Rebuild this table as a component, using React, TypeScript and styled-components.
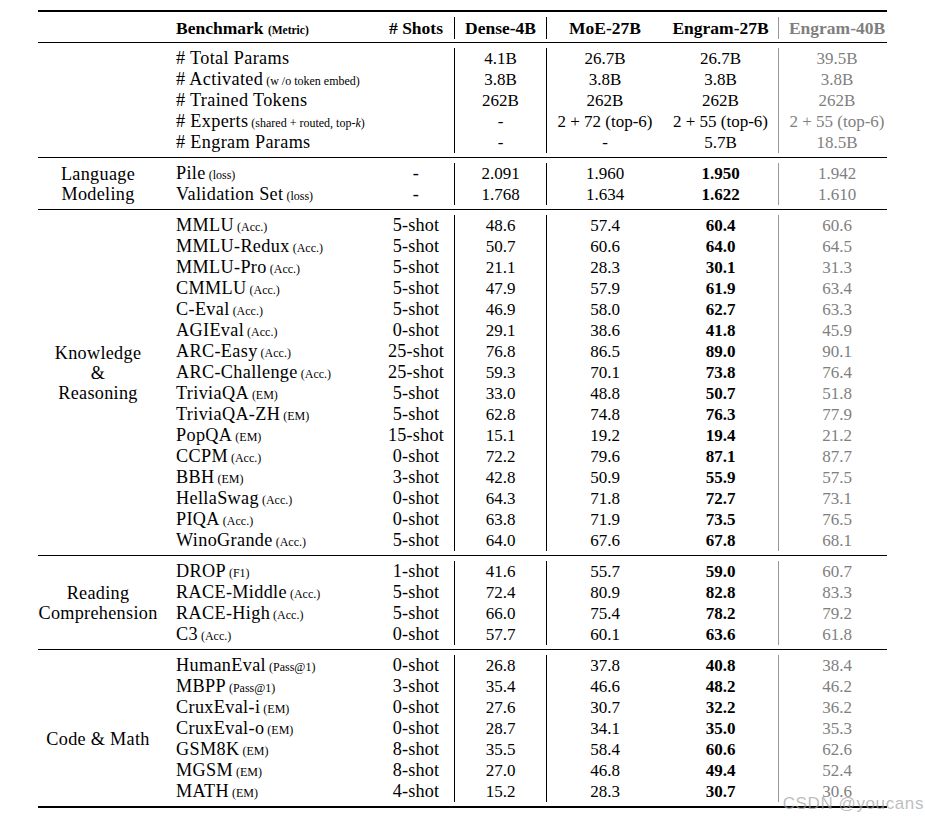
import React from "react";
import styled, { createGlobalStyle } from "styled-components";

type Row = {
  name: string;
  metric?: React.ReactNode;
  shots: string;
  values: [string, string, string, string];
};

type Section = {
  group?: string[];
  groupRow?: number;
  groupSpan?: number;
  boldEngram: boolean;
  rows: Row[];
};

const r = (
  name: string,
  metric: React.ReactNode,
  shots: string,
  a: string,
  b: string,
  c: string,
  d: string
): Row => ({ name, metric, shots, values: [a, b, c, d] });

const SECTIONS: Section[] = [
  {
    boldEngram: false,
    rows: [
      r("# Total Params", null, "", "4.1B", "26.7B", "26.7B", "39.5B"),
      r("# Activated", "(w /o token embed)", "", "3.8B", "3.8B", "3.8B", "3.8B"),
      r("# Trained Tokens", null, "", "262B", "262B", "262B", "262B"),
      r(
        "# Experts",
        <>
          (shared + routed, top-<i>k</i>)
        </>,
        "",
        "-",
        "2 + 72 (top-6)",
        "2 + 55 (top-6)",
        "2 + 55 (top-6)"
      ),
      r("# Engram Params", null, "", "-", "-", "5.7B", "18.5B"),
    ],
  },
  {
    group: ["Language", "Modeling"],
    groupRow: 1,
    groupSpan: 2,
    boldEngram: true,
    rows: [
      r("Pile", "(loss)", "-", "2.091", "1.960", "1.950", "1.942"),
      r("Validation Set", "(loss)", "-", "1.768", "1.634", "1.622", "1.610"),
    ],
  },
  {
    group: ["Knowledge", "&", "Reasoning"],
    groupRow: 7,
    groupSpan: 3,
    boldEngram: true,
    rows: [
      r("MMLU", "(Acc.)", "5-shot", "48.6", "57.4", "60.4", "60.6"),
      r("MMLU-Redux", "(Acc.)", "5-shot", "50.7", "60.6", "64.0", "64.5"),
      r("MMLU-Pro", "(Acc.)", "5-shot", "21.1", "28.3", "30.1", "31.3"),
      r("CMMLU", "(Acc.)", "5-shot", "47.9", "57.9", "61.9", "63.4"),
      r("C-Eval", "(Acc.)", "5-shot", "46.9", "58.0", "62.7", "63.3"),
      r("AGIEval", "(Acc.)", "0-shot", "29.1", "38.6", "41.8", "45.9"),
      r("ARC-Easy", "(Acc.)", "25-shot", "76.8", "86.5", "89.0", "90.1"),
      r("ARC-Challenge", "(Acc.)", "25-shot", "59.3", "70.1", "73.8", "76.4"),
      r("TriviaQA", "(EM)", "5-shot", "33.0", "48.8", "50.7", "51.8"),
      r("TriviaQA-ZH", "(EM)", "5-shot", "62.8", "74.8", "76.3", "77.9"),
      r("PopQA", "(EM)", "15-shot", "15.1", "19.2", "19.4", "21.2"),
      r("CCPM", "(Acc.)", "0-shot", "72.2", "79.6", "87.1", "87.7"),
      r("BBH", "(EM)", "3-shot", "42.8", "50.9", "55.9", "57.5"),
      r("HellaSwag", "(Acc.)", "0-shot", "64.3", "71.8", "72.7", "73.1"),
      r("PIQA", "(Acc.)", "0-shot", "63.8", "71.9", "73.5", "76.5"),
      r("WinoGrande", "(Acc.)", "5-shot", "64.0", "67.6", "67.8", "68.1"),
    ],
  },
  {
    group: ["Reading", "Comprehension"],
    groupRow: 2,
    groupSpan: 2,
    boldEngram: true,
    rows: [
      r("DROP", "(F1)", "1-shot", "41.6", "55.7", "59.0", "60.7"),
      r("RACE-Middle", "(Acc.)", "5-shot", "72.4", "80.9", "82.8", "83.3"),
      r("RACE-High", "(Acc.)", "5-shot", "66.0", "75.4", "78.2", "79.2"),
      r("C3", "(Acc.)", "0-shot", "57.7", "60.1", "63.6", "61.8"),
    ],
  },
  {
    group: ["Code & Math"],
    groupRow: 4,
    groupSpan: 2,
    boldEngram: true,
    rows: [
      r("HumanEval", "(Pass@1)", "0-shot", "26.8", "37.8", "40.8", "38.4"),
      r("MBPP", "(Pass@1)", "3-shot", "35.4", "46.6", "48.2", "46.2"),
      r("CruxEval-i", "(EM)", "0-shot", "27.6", "30.7", "32.2", "36.2"),
      r("CruxEval-o", "(EM)", "0-shot", "28.7", "34.1", "35.0", "35.3"),
      r("GSM8K", "(EM)", "8-shot", "35.5", "58.4", "60.6", "62.6"),
      r("MGSM", "(EM)", "8-shot", "27.0", "46.8", "49.4", "52.4"),
      r("MATH", "(EM)", "4-shot", "15.2", "28.3", "30.7", "30.6"),
    ],
  },
];

const MODELS = ["Dense-4B", "MoE-27B", "Engram-27B", "Engram-40B"];

export default function App() {
  return (
    <>
      <GlobalStyle />
      <Page>
        <Table>
          <Head>
            <HeadBench>
              Benchmark <SmallBold>(Metric)</SmallBold>
            </HeadBench>
            <HeadShots># Shots</HeadShots>
            {MODELS.map((m, i) => (
              <HeadModel key={m} $col={i}>
                {m}
              </HeadModel>
            ))}
          </Head>
          {SECTIONS.map((section, si) => (
            <Body key={si}>
              {section.group && (
                <GroupCell $row={section.groupRow ?? 1} $span={section.groupSpan ?? 1}>
                  {section.group.map((line) => (
                    <span key={line}>{line}</span>
                  ))}
                </GroupCell>
              )}
              {section.rows.map((row) => (
                <React.Fragment key={row.name}>
                  <BenchCell>
                    {row.name}
                    {row.metric && <Metric> {row.metric}</Metric>}
                  </BenchCell>
                  <ShotCell>{row.shots}</ShotCell>
                  {row.values.map((v, i) => (
                    <ValueCell key={i} $col={i} $bold={section.boldEngram && i === 2}>
                      {v}
                    </ValueCell>
                  ))}
                </React.Fragment>
              ))}
            </Body>
          ))}
        </Table>
        <Watermark>CSDN @youcans</Watermark>
      </Page>
    </>
  );
}

const GlobalStyle = createGlobalStyle`
  html, body {
    margin: 0;
    padding: 0;
    background: #ffffff;
  }
  body {
    font-family: "Liberation Serif", "DejaVu Serif", serif;
    color: #000;
  }
`;

const COLUMNS = "132px 208px 77px 92px 116px 116px 108px";
const GRAY = "#7f7f7f";

const Page = styled.div`
  position: relative;
  width: 925px;
  height: 818px;
  padding: 10px 0 0 38px;
  box-sizing: border-box;
`;

const Table = styled.div`
  width: 849px;
  border-top: 2px solid #000;
  border-bottom: 2px solid #000;
`;

const Grid = styled.div`
  display: grid;
  grid-template-columns: ${COLUMNS};
`;

const Head = styled(Grid)`
  grid-auto-rows: 22px;
  padding: 5px 0 3px;
  font-weight: bold;
  font-size: 17.5px;
  line-height: 22px;
`;

const Body = styled(Grid)`
  grid-auto-rows: 21px;
  padding: 5px 0 4px;
  border-top: 1px solid #000;
  font-size: 18.2px;
  line-height: 21px;
`;

const HeadBench = styled.div`
  grid-column: 2;
  padding-left: 6px;
  white-space: nowrap;
`;

const SmallBold = styled.span`
  font-size: 11.5px;
`;

const HeadShots = styled.div`
  grid-column: 3;
  text-align: center;
  border-right: 1px solid #000;
`;

const HeadModel = styled.div<{ $col: number }>`
  grid-column: ${(p) => p.$col + 4};
  text-align: center;
  white-space: nowrap;
  color: ${(p) => (p.$col === 3 ? GRAY : "#000")};
  padding-left: ${(p) => (p.$col === 3 ? "8px" : "0")};
  border-right: ${(p) =>
    p.$col === 0 ? "1px solid #000" : p.$col === 2 ? "1px solid #999" : "none"};
`;

const GroupCell = styled.div<{ $row: number; $span: number }>`
  grid-column: 1;
  grid-row: ${(p) => p.$row} / span ${(p) => p.$span};
  display: flex;
  flex-direction: column;
  align-items: center;
  justify-content: center;
  padding-right: 12px;
  line-height: 20px;
  letter-spacing: 0.3px;
  white-space: nowrap;
`;

const BenchCell = styled.div`
  grid-column: 2;
  padding-left: 6px;
  letter-spacing: 0.35px;
  white-space: nowrap;
`;

const Metric = styled.span`
  font-size: 12px;
  letter-spacing: 0;
`;

const ShotCell = styled.div`
  grid-column: 3;
  text-align: center;
  letter-spacing: 0.2px;
  border-right: 1px solid #000;
`;

const ValueCell = styled.div<{ $col: number; $bold: boolean }>`
  grid-column: ${(p) => p.$col + 4};
  text-align: center;
  white-space: nowrap;
  font-size: 17px;
  font-weight: ${(p) => (p.$bold ? "bold" : "normal")};
  color: ${(p) => (p.$col === 3 ? GRAY : "#000")};
  padding-left: ${(p) => (p.$col === 3 ? "8px" : "0")};
  border-right: ${(p) =>
    p.$col === 0 ? "1px solid #000" : p.$col === 2 ? "1px solid #999" : "none"};
`;

const Watermark = styled.div`
  position: absolute;
  right: 1px;
  top: 794px;
  font-family: "Liberation Sans", Arial, sans-serif;
  font-size: 17px;
  letter-spacing: 0.6px;
  color: rgba(160, 160, 160, 0.7);
`;
